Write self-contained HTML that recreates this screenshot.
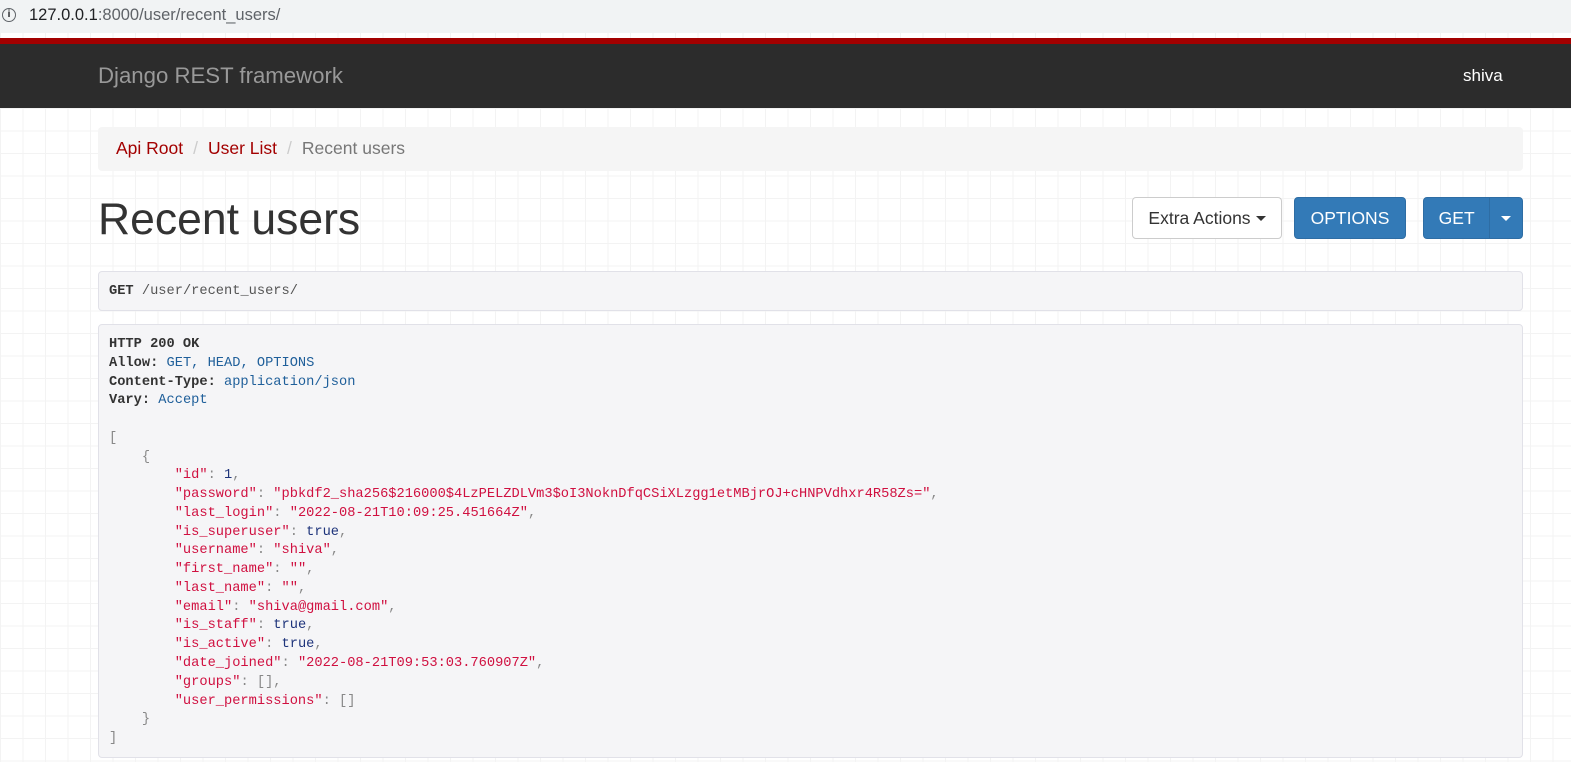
<!DOCTYPE html>
<html style="overflow:hidden"><head><meta charset="utf-8"><style>
*{box-sizing:border-box;margin:0;padding:0}
html,body{width:1571px;height:762px;overflow:hidden}
body{font-family:"Liberation Sans",sans-serif;background:#fff;
background-image:linear-gradient(#f3f3f3 1px,transparent 1px),linear-gradient(90deg,#f3f3f3 1px,transparent 1px);background-size:22.5px 22.5px;background-position:0 108px;position:relative}
.abar{position:absolute;left:0;top:0;width:1571px;height:33px;background:#f1f3f4;font-size:16.5px;color:#202124}
.abar .u{position:absolute;left:29px;top:6px}
.abar .u span{color:#5f6368}
.red{position:absolute;left:0;top:38px;width:1571px;height:7px;background:#a30000}
.nav{position:absolute;left:0;top:44px;width:1571px;height:64px;background:#2c2c2c}
.brand{position:absolute;left:98px;top:19px;font-size:22.2px;color:#999}
.user{position:absolute;left:1463px;top:22px;font-size:17px;color:#fff}
.bc{position:absolute;left:98px;top:127px;width:1425px;height:44px;background:#f5f5f5;border-radius:4px;font-size:17.5px;padding:11px 18px;color:#777}
.bc a{color:#a30000;text-decoration:none}
.bc .s{color:#ccc;padding:0 10px}
h1{position:absolute;left:98px;top:195px;font-size:44.5px;font-weight:400;color:#333}
.btn{position:absolute;top:197px;height:42px;border-radius:4px;font-size:17.5px;display:flex;align-items:center;justify-content:center}
.ea{left:1132px;width:150px;border:1px solid #ccc;background:#fff;color:#333}
.op{left:1294px;width:112px;background:#337ab7;color:#fff;border:1px solid #2e6da4}
.gt{left:1423px;width:100px;background:#337ab7;color:#fff;border:1px solid #2e6da4;justify-content:flex-start}
.car{display:inline-block;border-left:5px solid transparent;border-right:5px solid transparent;border-top:5px solid currentColor;margin-left:5px;vertical-align:middle}
.box{position:absolute;left:98px;width:1425px;background:#f5f5f7;border:1px solid #e1e1e8;border-radius:4px;font-family:"Liberation Mono",monospace;font-size:13.7px;color:#333}
.req{top:271px;height:40px;padding:12px 10px}
.res{top:324px;height:434px;padding:11px 10px;line-height:18.76px;white-space:pre}
b{font-weight:bold}
.h{color:#1f5f9a}.k{color:#d01040}.v{color:#1e347b}.p{color:#888}
</style></head><body>
<div class="abar"><div style="position:absolute;left:2px;top:8px;width:14px;height:14px;border:1.5px solid #5f6368;border-radius:50%;font-size:10px;text-align:center;line-height:11px;font-weight:bold">i</div><div class="u">127.0.0.1<span>:8000/user/recent_users/</span></div></div>
<div class="red"></div>
<div class="nav"><div class="brand">Django REST framework</div><div class="user">shiva</div></div>
<div class="bc"><a>Api Root</a><span class="s">/</span><a>User List</a><span class="s">/</span>Recent users</div>
<h1>Recent users</h1>
<div class="btn ea">Extra Actions<span class="car"></span></div>
<div class="btn op">OPTIONS</div>
<div class="btn gt"><span style="width:66px;text-align:center">GET</span><span style="width:33px;height:40px;border-left:1px solid #2e6da4;display:flex;align-items:center;justify-content:center"><span class="car" style="margin:0"></span></span></div>
<div class="box req"><b>GET</b> <span style="color:#555">/user/recent_users/</span></div>
<div class="box res"><b>HTTP 200 OK</b>
<b>Allow:</b> <span class="h">GET, HEAD, OPTIONS</span>
<b>Content-Type:</b> <span class="h">application/json</span>
<b>Vary:</b> <span class="h">Accept</span>

<span class="p">[</span>
    <span class="p">{</span>
        <span class="k">"id"</span><span class="p">: </span><span class="v">1</span><span class="p">,</span>
        <span class="k">"password"</span><span class="p">: </span><span class="k">"pbkdf2_sha256$216000$4LzPELZDLVm3$oI3NoknDfqCSiXLzgg1etMBjrOJ+cHNPVdhxr4R58Zs="</span><span class="p">,</span>
        <span class="k">"last_login"</span><span class="p">: </span><span class="k">"2022-08-21T10:09:25.451664Z"</span><span class="p">,</span>
        <span class="k">"is_superuser"</span><span class="p">: </span><span class="v">true</span><span class="p">,</span>
        <span class="k">"username"</span><span class="p">: </span><span class="k">"shiva"</span><span class="p">,</span>
        <span class="k">"first_name"</span><span class="p">: </span><span class="k">""</span><span class="p">,</span>
        <span class="k">"last_name"</span><span class="p">: </span><span class="k">""</span><span class="p">,</span>
        <span class="k">"email"</span><span class="p">: </span><span class="k">"shiva@gmail.com"</span><span class="p">,</span>
        <span class="k">"is_staff"</span><span class="p">: </span><span class="v">true</span><span class="p">,</span>
        <span class="k">"is_active"</span><span class="p">: </span><span class="v">true</span><span class="p">,</span>
        <span class="k">"date_joined"</span><span class="p">: </span><span class="k">"2022-08-21T09:53:03.760907Z"</span><span class="p">,</span>
        <span class="k">"groups"</span><span class="p">: [],</span>
        <span class="k">"user_permissions"</span><span class="p">: []</span>
    <span class="p">}</span>
<span class="p">]</span></div>
</body></html>
